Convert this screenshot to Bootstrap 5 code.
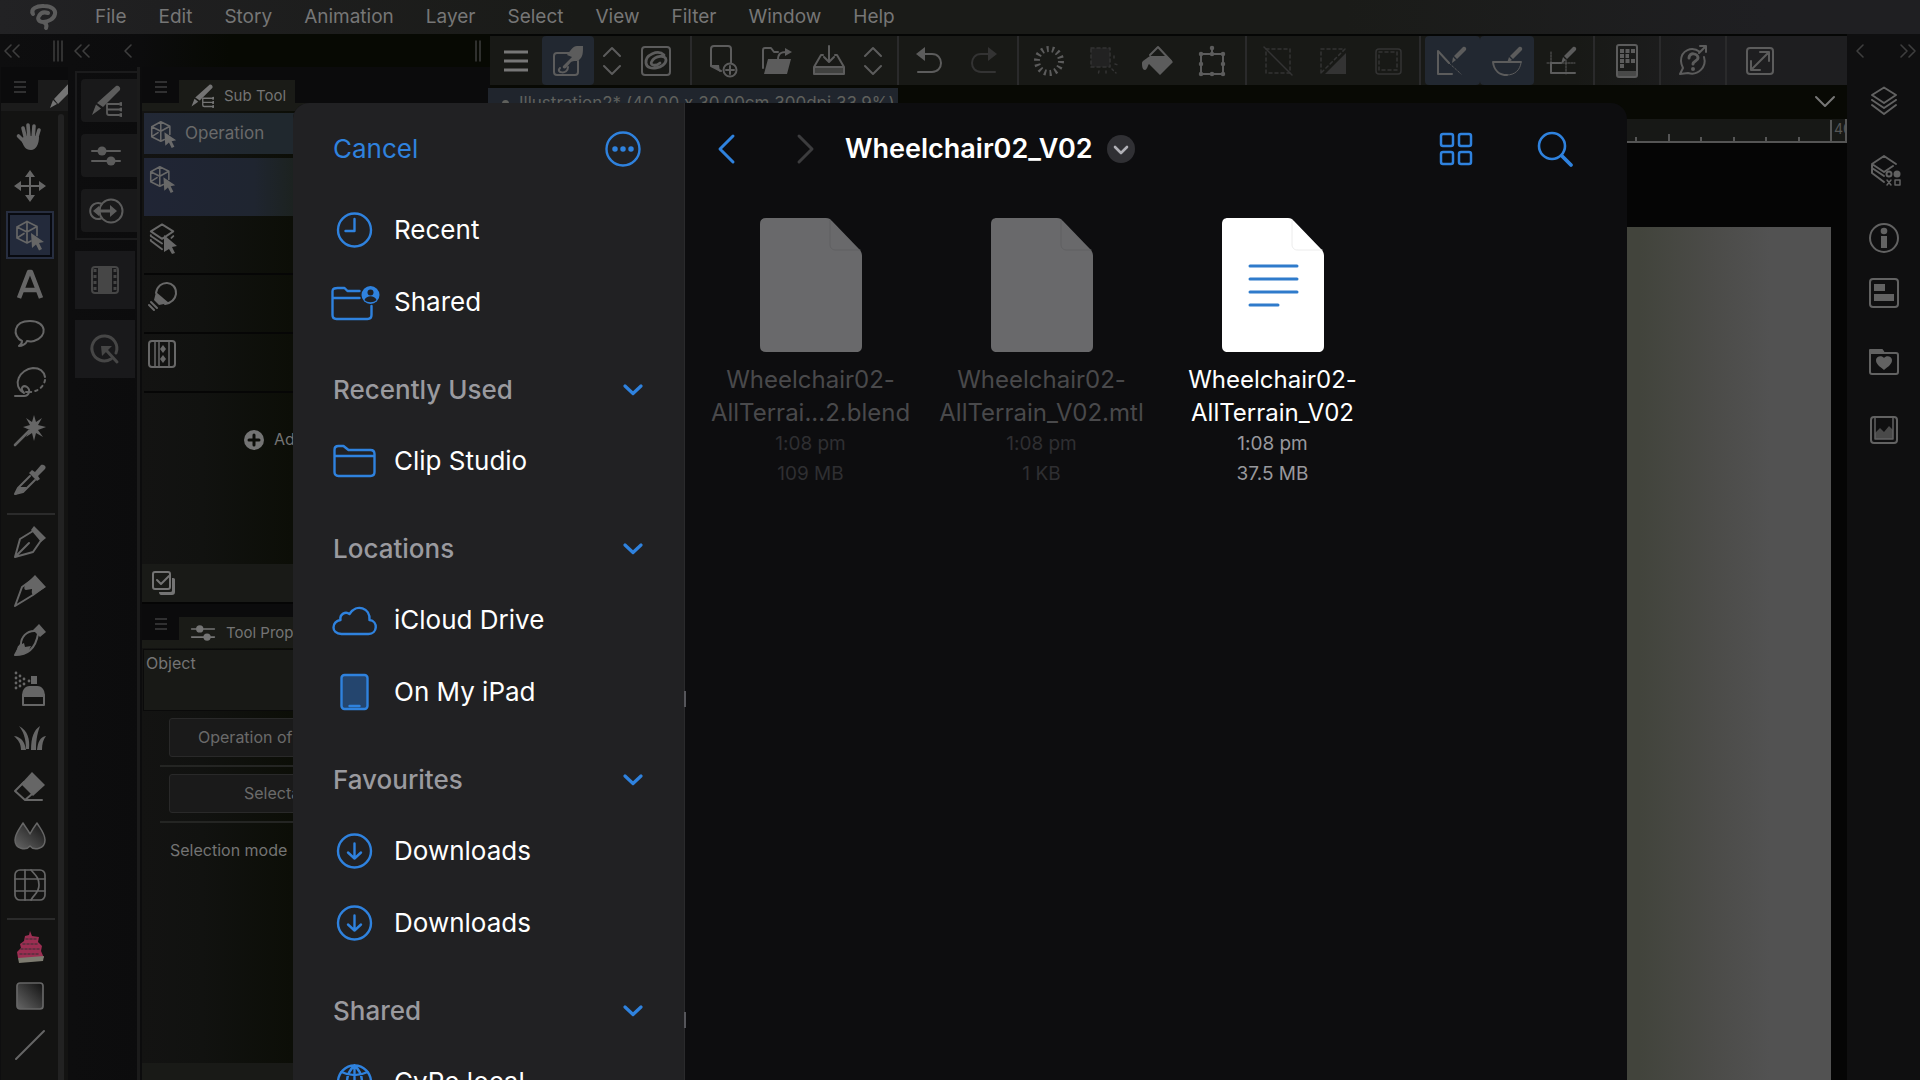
<!DOCTYPE html>
<html lang="en">
<head>
<meta charset="utf-8">
<meta name="viewport" content="width=device-width, initial-scale=1">
<title>Illustration2 - Import file</title>
<link href="https://cdn.jsdelivr.net/npm/bootstrap@5.3.0/dist/css/bootstrap.min.css" rel="stylesheet">
<style>
:root{--ink:#666;--blue:#2f82de}
body{font-family:Inter,"Liberation Sans",sans-serif;font-feature-settings:"calt" 0;background:#050605;color:#747474;height:100vh;overflow:hidden;line-height:1.2;fill:none;stroke-width:2;stroke-linecap:round;stroke-linejoin:round}
button{background:none;border:0;padding:0;color:inherit;font:inherit;white-space:nowrap}
a{color:inherit;text-decoration:none}
svg{display:block;flex:none;overflow:visible;stroke:currentColor}
.f{fill:currentColor;stroke:none}
.app-menu{height:34px;padding-left:29px;gap:32px;font-size:19px;color:#767676;background:linear-gradient(90deg,#222224 0,#1f1f20 160px,#1a1b18 30%,#1a1b18 70%,#1f1f22 92%)}
.brand{width:34px}
.left-dock{width:490px;background:linear-gradient(90deg,#0e0e0f 0,#0c0c0d 140px,#070903 230px)}
.dock-strip{height:33px;color:#3e3e3e}
.strip-a{width:70px;padding-left:4px}
.strip-b{width:70px;padding-left:4px}
.tool-col{width:67px;margin-left:1px;background:#131312}
.tabs-row{height:44px;border-bottom:8px solid #1b1b1b;color:#3e3e3e;padding-top:13px;background:#0b0b0c}
.tabs-row .burger{width:37px;padding:0 0 10px}
.tool-tab{background:#1b1b1b;height:31px;flex:1;color:#747474;overflow:hidden}
.tools{width:57px;padding-top:1px;color:var(--ink)}
.tool-btn{height:49px;display:flex;align-items:center;justify-content:center;width:100%}
.tool-btn.on .tool-ic{background:#232a3b;border:2px solid #080a10;outline:2px solid #272e40;width:44px;height:44px;display:flex;align-items:center;justify-content:center}
.tool-line{height:2px;margin:9px 3px 2px 6px;background:#2b2b2b}
.scroll-rail{width:6px;margin:3px 4px 0 0;background:#222;border-radius:3px 3px 0 0}
.quick-col{width:62px;margin-left:7px;color:#5c5c5c}
.quick-set{border:2px solid #1b1b1c;border-right:0;margin-top:4px;padding:6px 0 6px 4px;display:grid;gap:12px}
.quick-set button{height:43px;background:#19191a;border-radius:4px 0 0 4px;display:flex;align-items:center;padding-left:9px}
.quick-one{height:58px;margin-top:11px;background:#19191b;display:flex;align-items:center;justify-content:center;width:60px;color:#464646}
.dock-edge{width:3px;background:#1b1b1b}
.sub-col{margin-left:2px;background:linear-gradient(90deg,#131312 0,#111210 60px,#0c0e07 150px)}
.sub-col .tool-tab{flex:none;width:116px;padding-left:11px;gap:10px;font-size:15px;background:#1a1b17}
.sub-col .tabs-row{border-bottom-color:#1a1b17}
.sub-name{height:41px;margin:2px 0 0 2px;background:linear-gradient(90deg,#222836,#20282e 120px);padding-left:5px;gap:7px;font-size:17px;color:#6a6a6a}
.sub-row{height:59px;border-bottom:2px solid #060606;padding:6px 0 0 4px;width:100%;display:flex;color:#686868}
.sub-row.on{height:58px;margin-top:4px;border:0;background:linear-gradient(90deg,#202535,#1f2530 110px,#1c221f 152px)}
.sub-rows{padding:0 0 0 2px}
.add-row{height:94px;padding-left:102px;gap:10px;font-size:16px}
.list-foot{height:40px;margin-top:77px;background:#191a17;padding-left:10px;border-bottom:2px solid #050505}
.prop-name{height:62px;margin:1px 0 0 1px;background:#181916;border:1px solid #0a0a0a;padding:4px 2px;font-size:16px}
.prop-btn{display:block;height:39px;margin:7px 0 8px 27px;width:300px;border:1px solid #292929;border-radius:3px;background:#1a1a1a;text-align:left;font-size:16px;color:#6a6a6a;flex:none}
.prop-rule{height:2px;margin-left:18px;background:#242523;flex:none}
.prop-mode{padding:18px 0 0 28px;font-size:16px}
.prop-foot{height:17px;background:#191a17}
.tool-strip{height:49px;margin-top:2px;background:linear-gradient(90deg,#181916 80%,#1e1e20 90%);color:#5c5c5c}
.grp{border-right:2px solid #2a2a2b;padding:0 4px;display:flex;flex:none}
.grp button{flex:1;display:flex;align-items:center;justify-content:center}
.grp .narrow{flex:none;width:36px}
.grp .on{background:#222831;border-radius:4px}
.dim{color:#333}
.w201{width:202px;padding:0 8px 0 0}.w207{width:207px;padding:0 6px 0 5px}.w120{width:120px;padding:0 6px 0 3px}.w228{width:228px;padding:0 6px 0 3px}.w174{width:174px}.w67{width:66px}
.doc-row{height:34px;background:#080904;padding-top:3px;color:#777}
.doc-tab{width:410px;margin-left:-2px;background:#20252d;font-size:17px;padding:5px 0 0 14px;color:#5f605c;gap:10px}
.doc-dot{width:7px;height:7px;border-radius:50%;background:#5f605c;margin:7px 0 0}
.ruler-bar{height:24px;background:#171816;border-bottom:2px solid #555;color:#555;overflow:hidden}
.stage{background:#050505;padding:84px 16px 0 0}
.paper{background:linear-gradient(90deg,#42443c 0,#42443c 1150px,#4b4b48 1220px,#525252 1280px)}
.right-dock{width:73px;background:#0f0f10;color:#626262}
.right-dock .dock-strip{color:#3e3e3e;padding:0 4px 0 9px}
.right-dock button{display:flex;justify-content:center;width:100%}
.sheet{position:absolute;left:293px;right:293px;top:103px;bottom:0;border-radius:16px 16px 0 0;overflow:hidden;background:#0d0d0f;color:#fff}
.places{width:392px;background:#212123;border-right:1px solid #2a2a2c;padding:1px 0 0 40px;font-size:26px}
.places-head{height:90px;padding-right:41px;color:var(--blue)}
.place{height:72px;gap:18px;display:flex;align-items:center;color:#fff;flex:none}
.place svg{width:43px;color:var(--blue)}
.place-title{height:70px;margin-top:17px;padding-right:41px;color:#9a9a9f;width:100%;flex:none;font-weight:500}
.place-title svg{color:var(--blue)}
.split-mark{position:absolute;left:391px;width:2px;height:16px;background:#55555a}
.mark-a{top:588px}.mark-b{top:909px}
.files-head{height:92px;color:var(--blue)}
.files-title{font-size:27px;font-weight:600;color:#fff;margin:0 14px 0 28px}
.files{padding:23px 0 0 10px}
.file{width:231px;text-align:center}
.file svg{width:102px;height:134px;margin:0 auto 11px}
.file-name{font-size:24px;line-height:33px}
.file-meta{font-size:19px;line-height:30px;color:#98989d}
.file.off{color:#49494b}.file.off .file-meta{color:#2f2f32}
</style>
<script src="https://cdn.jsdelivr.net/npm/bootstrap@5.3.0/dist/js/bootstrap.bundle.min.js"></script>
</head>
<body class="d-flex flex-column position-relative">
<svg width="0" height="0" class="position-absolute" aria-hidden="true">
<defs>
<symbol id="cube" viewBox="0 0 32 32"><path d="M13 2.500l10 5v9M13 2.500l-10 5.500v11l10 5 4-2M3 8l10 5 10-5.500M13 2.500v21.500M3 19l7-4.500" stroke-width="1.700"/><path class="f" d="M17 14l13 9-5 1 3 6-3 1.500-3-6-4 3.500z"/></symbol>
<symbol id="penlist" viewBox="0 0 32 32"><path class="f" d="M26 1c2-1 5 1 4 4L13 22l-6-4zM6 19.500l5 4L2 30z"/><path d="M17 19h12M17 19v9c0 1 1 2 2 2h10M17 24.500h12" stroke-width="1.800"/><circle class="f" cx="31" cy="19" r="2"/><circle class="f" cx="31" cy="24.500" r="2"/><circle class="f" cx="31" cy="30" r="2"/></symbol>
<symbol id="stack" viewBox="0 0 32 32"><path d="M15 2.500L27 10l-12 8L3 10zM3 15l12 8M3 15v-1M27 15l-2 2M3 20l12 9M3 20v-1"/></symbol>
<symbol id="sliders" viewBox="0 0 32 32"><path d="M2 11h28M2 21h28"/><circle class="f" cx="12" cy="11" r="4.500"/><circle class="f" cx="21" cy="21" r="4.500"/></symbol>
<symbol id="menu3" viewBox="0 0 12 14"><path d="M0 2h12M0 7h12M0 12h12" stroke-width="1.500"/></symbol>
<symbol id="chev2" viewBox="0 0 16 14"><path d="M7 1L1 7l6 6M15 1L9 7l6 6" stroke-width="1.600"/></symbol>
<symbol id="updown" viewBox="0 0 18 30"><path d="M1 10l8-8 8 8M1 20l8 8 8-8"/></symbol>
<symbol id="down" viewBox="0 0 20 12"><path d="M2 2l8 7.500L18 2" stroke-width="3.200"/></symbol>
<symbol id="dl" viewBox="0 0 40 40"><circle cx="20" cy="20" r="16.500" stroke-width="2.400"/><path d="M20 12.500v15M13.500 21.500l6.500 6 6.500-6" stroke-width="2.400"/></symbol>
<linearGradient id="fade" x1="0" y1="1" x2="1" y2="0"><stop offset="0" stop-color="#666"/><stop offset="1" stop-color="#111"/></linearGradient>
</defs></svg>

<nav class="app-menu d-flex align-items-center flex-shrink-0" aria-label="Application">
<a class="brand" href="#" aria-label="Clip Studio"><svg width="28" height="28" viewBox="0 0 28 28" color="#5c5c5c" stroke-width="4"><path d="M4 11C1 6 8 2.500 15 3c8 0 12 4 11 8-1 5-7 8-12 8-4 0-6-3-4-6 2-4 6-4 9-3M14 19c3 1 4 3 3 6"/></svg></a>
<a href="#">File</a><a href="#">Edit</a><a href="#">Story</a><a href="#">Animation</a><a href="#">Layer</a><a href="#">Select</a><a href="#">View</a><a href="#">Filter</a><a href="#">Window</a><a href="#">Help</a>
</nav>

<div class="d-flex flex-fill" style="min-height:0">
<aside class="left-dock d-flex flex-column flex-shrink-0">
 <div class="dock-strip d-flex align-items-center">
  <div class="strip-a d-flex justify-content-between align-items-center pe-2"><svg width="16" height="14"><use href="#chev2"/></svg><svg width="8" height="20" viewBox="0 0 8 20" stroke-width="1.500"><path d="M0 0v20M4 0v20M8 0v20"/></svg></div>
  <div class="strip-b d-flex justify-content-between align-items-center pe-2"><svg width="16" height="14"><use href="#chev2"/></svg><svg width="8" height="14" viewBox="0 0 8 14"><path d="M7 1L1 7l6 6" stroke-width="1.600"/></svg></div>
  <svg class="ms-auto me-2" width="8" height="20" viewBox="0 0 8 20" stroke-width="1.500"><path d="M2 0v20M6 0v20"/></svg>
 </div>
 <div class="d-flex flex-fill" style="min-height:0">
  <section class="tool-col d-flex flex-column" aria-label="Tools">
   <div class="tabs-row d-flex"><button class="burger d-flex justify-content-center align-items-center" aria-label="Tool menu"><svg width="12" height="14"><use href="#menu3"/></svg></button>
    <div class="tool-tab"><svg width="30" height="30" viewBox="0 0 30 30"><path class="f" d="M32 2v10L20 24l-4-5zM15 20l4 4-7 4z"/></svg></div></div>
   <div class="d-flex justify-content-between flex-fill" style="min-height:0">
    <div class="tools">
     <button class="tool-btn" aria-label="Hand"><svg width="32" height="32" viewBox="0 0 32 32"><path stroke-width="3.600" d="M9 7l3 12M14 4l1 13M20 5l-1 13M25 9l-3 10M4.500 15l6 6"/><path class="f" d="M8 17l4-2h10l3 1c0 7-3 13-8 13-6 0-7-4-9-8z"/></svg></button>
     <button class="tool-btn" aria-label="Move"><svg width="32" height="32" viewBox="0 0 32 32"><path d="M16 5v22M5 16h22"/><path class="f" d="M16 0l5 7H11zM16 32l-5-7h10zM0 16l7-5v10zM32 16l-7 5V11z"/></svg></button>
     <button class="tool-btn on" aria-label="Operation"><span class="tool-ic"><svg width="32" height="32"><use href="#cube"/></svg></span></button>
     <button class="tool-btn" aria-label="Text"><svg width="32" height="32" viewBox="0 0 32 32"><path stroke-width="4.500" stroke-linecap="butt" d="M5 30L15 4h2l10 26M9 22h14"/></svg></button>
     <button class="tool-btn" aria-label="Balloon"><svg width="32" height="32" viewBox="0 0 32 32"><path d="M8 24C-2 19-1 4 16 4s18 16 4 20c-3 1-5 0-7 0-1 3-5 5-8 5 2-1 3-3 3-5z"/></svg></button>
     <button class="tool-btn" aria-label="Lasso"><svg width="32" height="32" viewBox="0 0 32 32"><path d="M10 27C-3 19 6 3 19 2c7 0 11 4 12 9M10 27c-5-6 0-8 3-6 4 3 2 9-3 9H1M12 26h4"/><path stroke-dasharray="2.500 4" d="M31 14c-1 6-6 11-14 12"/></svg></button>
     <button class="tool-btn" aria-label="Auto select"><svg width="32" height="32" viewBox="0 0 32 32"><path stroke-width="2.600" d="M1 30l14-14"/><path class="f" d="M20 0l2 7 6-4-4 7 8 2-8 3 5 7-7-4-2 8-2-8-6 4 4-7-7-3 7-2-4-7 6 4z"/></svg></button>
     <button class="tool-btn" aria-label="Eyedropper"><svg width="32" height="32" viewBox="0 0 32 32"><path d="M16 12L4 24 1 30l8-2 12-12"/><path class="f" d="M15 9l3-3 3 2 6-7c3-1 6 2 4 4l-7 7 2 3-3 2zM5 23h8l-5 5-7 3z"/></svg></button>
     <div class="tool-line"></div>
     <button class="tool-btn" aria-label="Pen"><svg width="32" height="32" viewBox="0 0 32 32"><path d="M19 5L6 13 1 31l18-5 9-13M1 31l14-14"/><path class="f" d="M20 0l12 12-5 4L17 4z"/></svg></button>
     <button class="tool-btn" aria-label="Marker"><svg width="32" height="32" viewBox="0 0 32 32"><path d="M19 4L8 12 1 31l18-11 11-8"/><path class="f" d="M21 0l11 12-13 8c-2-2-1-4-1-6l-6 1c-2 0-2-3-1-5z"/></svg></button>
     <button class="tool-btn" aria-label="Brush"><svg width="32" height="32" viewBox="0 0 32 32"><path d="M22 7C12 6 7 14 7 20L1 31c9 0 20-3 23-21"/><path class="f" d="M19 6l6-6 7 8-6 5zM4 22l6-3 1 4 6-1-3 6-13 4z"/></svg></button>
     <button class="tool-btn" aria-label="Airbrush"><svg width="32" height="32" viewBox="0 0 32 32"><path d="M9 22h21v10H9z"/><path class="f" d="M8 24c0-10 5-11 9-11h5c4 0 9 1 9 11zM17 3h6v8h-6z"/><path stroke-dasharray="0 5" stroke-width="2.800" d="M2 0v18M6 3v14M10 6v6M15 8v1"/></svg></button>
     <button class="tool-btn" aria-label="Decoration"><svg width="32" height="32" viewBox="0 0 32 32"><path class="f" d="M7 28C7 21 4 18 0 14c8 1 11 7 12 14zM12 27C12 16 9 9 5 4c9 5 11 13 10 23zM17 28c0-13 3-20 9-24-2 6-4 12-4 24zM23 28c1-8 3-13 9-14-3 4-4 8-4 14z"/></svg></button>
     <button class="tool-btn" aria-label="Eraser"><svg width="32" height="32" viewBox="0 0 32 32"><path d="M10 11l-9 9 10 9h17M18 23l-7 6"/><path class="f" d="M18 1l13 13-12 11L7 13z"/></svg></button>
     <button class="tool-btn" aria-label="Blend"><svg width="32" height="32" viewBox="0 0 32 32"><path fill="url(#fade)" stroke-width="1.500" d="M9 3c3 5 5 7 7 11 2-4 4-7 7-11 5 8 8 11 8 17 0 9-11 11-15 6-4 5-15 3-15-6C1 14 4 11 9 3z"/></svg></button>
     <button class="tool-btn" aria-label="Liquify"><svg width="32" height="32" viewBox="0 0 32 32" stroke-width="1.700"><rect x="1" y="1" width="30" height="30" rx="5"/><path d="M11 1v30M1 10h30M1 22h30M17 1c4 5 8 7 8 15s-5 9-8 15"/></svg></button>
     <div class="tool-line"></div>
     <button class="tool-btn" aria-label="Sticker brush"><svg width="32" height="34" viewBox="0 0 32 34"><path fill="#9c2e52" stroke="none" d="M16 1l2 5 7 1-1 5 4 4-1 5 3 7H4l-1-6 4-4-1-4 4-3 1-5 4-1z"/><path stroke="#55303e" stroke-width="1.500" stroke-dasharray="2 2" d="M12 9h10M9 14h15M7 19h18M6 24h20"/><path fill="#7d7b70" stroke="none" d="M4 28l26-2-1 5-24 2z"/></svg></button>
     <button class="tool-btn" aria-label="Gradient"><svg width="32" height="32" viewBox="0 0 32 32" stroke-width="1.700"><rect x="3" y="3" width="26" height="26" rx="3" fill="url(#fade)"/></svg></button>
     <button class="tool-btn" aria-label="Line"><svg width="32" height="32" viewBox="0 0 32 32"><path d="M2 30L30 2"/></svg></button>
    </div>
    <div class="scroll-rail"></div>
   </div>
  </section>
  <section class="quick-col" aria-label="Quick palettes">
   <div class="quick-set">
    <button aria-label="Sub tool"><svg width="32" height="32"><use href="#penlist"/></svg></button>
    <button aria-label="Tool property"><svg width="32" height="32"><use href="#sliders"/></svg></button>
    <button aria-label="Switch"><svg width="34" height="26" viewBox="0 0 34 26"><circle cx="21" cy="13" r="11.500"/><path d="M11 5.500a8 8 0 1 0 0 15"/><path d="M6 13h18" stroke-width="3"/><path class="f" d="M3 13l6-5v10zM27 13l-7-6v12z"/></svg></button>
   </div>
   <button class="quick-one" aria-label="Timeline"><svg width="28" height="28" viewBox="0 0 28 28"><rect x="1" y="1" width="26" height="26" rx="3"/><path class="f" d="M7 2h14v24H7z"/><path stroke-dasharray="3 3" stroke-linecap="butt" stroke-width="3" d="M4 3v23M24 3v23"/></svg></button>
   <button class="quick-one" aria-label="Quick access"><svg width="28" height="28" viewBox="0 0 28 28" stroke-width="3"><path d="M20 24a12.500 12.500 0 1 1 5-6M15 15l11 12"/><path class="f" d="M10 11h11l-10 10z"/></svg></button>
  </section>
  <div class="dock-edge"></div>
  <section class="sub-col flex-fill d-flex flex-column" aria-label="Sub Tool">
   <div class="tabs-row d-flex flex-shrink-0"><button class="burger d-flex justify-content-center align-items-center" aria-label="Sub tool menu"><svg width="12" height="14"><use href="#menu3"/></svg></button>
    <div class="tool-tab d-flex align-items-center"><svg width="24" height="24"><use href="#penlist"/></svg><span>Sub Tool</span></div></div>
   <div class="sub-name d-flex align-items-center flex-shrink-0"><svg width="29" height="30"><use href="#cube"/></svg><span>Operation</span></div>
   <div class="sub-rows">
    <button class="sub-row on" aria-label="Object"><svg width="29" height="30"><use href="#cube"/></svg></button>
    <button class="sub-row" aria-label="Layer selection"><svg width="30" height="32" viewBox="0 0 30 32"><use href="#stack" width="30" height="30"/><path class="f" d="M16 13l13 11-5 1 3 6-3 1-3-5-5 3z" stroke="#111210"/></svg></button>
    <button class="sub-row" aria-label="Light table"><svg width="30" height="30" viewBox="0 0 30 30"><path d="M8 12C10-2 29-1 28 13c-1 7-6 9-11 10M1 24l5 5M3 21l6 6"/><path class="f" d="M8 11l13 11-10 2-5-5z"/></svg></button>
    <button class="sub-row" aria-label="Edit timeline"><svg width="28" height="28" viewBox="0 0 28 28"><rect x="1" y="1" width="26" height="26" rx="3"/><path d="M7 1v26M11 2v24M21 2v24" stroke-width="1.500"/><path class="f" d="M15 5l3 4-3 4-3-4zM15 15l3 4-3 4-3-4z"/></svg></button>
   </div>
   <div class="add-row d-flex align-items-center flex-shrink-0"><svg width="20" height="20" viewBox="0 0 20 20"><circle class="f" cx="10" cy="10" r="10"/><path d="M10 5v10M5 10h10" stroke="#0c0d09" stroke-width="3"/></svg><span>Add sub tool</span></div>
   <div class="list-foot d-flex align-items-center flex-shrink-0"><svg width="24" height="24" viewBox="0 0 24 24"><rect x="1" y="1" width="17" height="17" rx="2"/><path d="M5 9l4 4 8-8"/><path class="f" d="M20 7h1c2 0 2 1 2 2v12c0 2-1 3-3 3H9c-1 0-2-1-2-3h11c2 0 2-1 2-2z"/></svg></div>
   <div class="tabs-row d-flex flex-shrink-0"><button class="burger d-flex justify-content-center align-items-center" aria-label="Property menu"><svg width="12" height="14"><use href="#menu3"/></svg></button>
    <div class="tool-tab d-flex align-items-center w-75"><svg width="26" height="26"><use href="#sliders"/></svg><span>Tool Property</span></div></div>
   <div class="prop-name flex-shrink-0">Object</div>
   <button class="prop-btn" style="padding-left:28px">Operation of transparent part</button>
   <div class="prop-rule"></div>
   <button class="prop-btn" style="padding-left:74px">Selectable object</button>
   <div class="prop-rule"></div>
   <div class="prop-mode">Selection mode</div>
   <div class="prop-foot mt-auto"></div>
  </section>
 </div>
</aside>

<main class="flex-fill d-flex flex-column" style="min-width:0">
 <div class="tool-strip d-flex flex-shrink-0">
  <div class="grp w201">
   <button aria-label="Menu"><svg width="24" height="22" viewBox="0 0 24 22" stroke-width="3" stroke-linecap="butt"><path d="M0 2h24M0 11h24M0 20h24" color="#777"/></svg></button>
   <button class="on" aria-label="Touch gestures"><svg width="30" height="30" viewBox="0 0 30 30"><path d="M16 7H4C2 7 1 8 1 10v16c0 2 1 3 3 3h18c2 0 3-1 3-3V15M7 22c-5 5 8 7 8-1"/><path class="f" d="M10 20l9-9-5-2c3-4 6-9 10-9h6c0 7 0 11-4 14-3 2-5 0-8 2l-5 6c-2 1-4 0-3-2z"/></svg></button>
   <button class="narrow" aria-label="Expand"><svg width="18" height="30"><use href="#updown"/></svg></button>
   <button aria-label="Clip Studio"><svg width="30" height="30" viewBox="0 0 30 30"><rect x="1" y="1" width="28" height="28" rx="3"/><path d="M23 9C17 3 4 9 5 17c1 9 20 5 20-3 0-6-11-4-14 1-3 4 3 6 8 2" stroke-width="2.800"/></svg></button>
  </div>
  <div class="grp w207">
   <button aria-label="New"><svg width="30" height="32" viewBox="0 0 30 32"><path d="M13 26L3 21V4c0-2 1-3 3-3h14c2 0 3 1 3 3v14"/><path class="f" d="M3 20h8l1 7z"/><circle cx="22" cy="25" r="6.500"/><path d="M22 21v8M18 25h8"/></svg></button>
   <button aria-label="Open"><svg width="32" height="30" viewBox="0 0 32 30"><path d="M3 22V4c0-1 1-2 2-2h6l3 4h4M18 14c0-6 2-8 9-8"/><path class="f" d="M8 13h23l-4 15H4zM25 2l7 4-7 4z"/></svg></button>
   <button aria-label="Save"><svg width="32" height="30" viewBox="0 0 32 30"><path d="M10 9H8L1 21v7h30v-7L24 9h-2M1 21h30M16 0v15M11 11l5 5 5-5"/><path class="f" d="M1 22h30v6H1z" opacity=".6"/></svg></button>
   <button class="narrow" aria-label="More"><svg width="18" height="30"><use href="#updown"/></svg></button>
  </div>
  <div class="grp w120">
   <button aria-label="Undo"><svg width="26" height="28" viewBox="0 0 26 28"><path d="M8 7h8c12 0 12 18 0 18H2"/><path class="f" d="M0 7l9-7v14z"/></svg></button>
   <button class="dim" aria-label="Redo"><svg width="26" height="28" viewBox="0 0 26 28"><path d="M18 7h-8C-2 7-2 25 10 25h14"/><path class="f" d="M26 7l-9-7v14z"/></svg></button>
  </div>
  <div class="grp w228">
   <button aria-label="Clear"><svg width="30" height="30" viewBox="0 0 30 30"><circle cx="15" cy="15" r="12" stroke-width="6" stroke-linecap="butt" stroke-dasharray="2 3.390"/></svg></button>
   <button class="dim" aria-label="Clear outside"><svg width="30" height="30" viewBox="0 0 30 30" stroke-width="1.500"><path stroke-dasharray="3 3" d="M3 2h19v19H3z" fill="#222"/><path stroke-dasharray="2 3" d="M26 10v4M27 18l3 1M24 23l4 4M18 25v5M11 25l-1 4"/></svg></button>
   <button aria-label="Fill"><svg width="32" height="30" viewBox="0 0 32 30"><path d="M8 9l8-8 13 14"/><path class="f" d="M8 10h17l6 6-13 13L7 18c-1 1-2 6-4 6-3 0-3-5-3-7s4-4 5-5z"/></svg></button>
   <button aria-label="Scale and rotate"><svg width="28" height="32" viewBox="0 0 28 32"><path d="M3 9h22v20H3zM14 9V3"/><path stroke-width="4.500" d="M3 9v0M25 9v0M3 29v0M25 29v0M14 3v0M14 9v0M14 29v0M3 19v0M25 19v0"/></svg></button>
  </div>
  <div class="grp w174 dim">
   <button aria-label="Deselect"><svg width="28" height="28" viewBox="0 0 28 28" stroke-width="1.500"><path stroke-dasharray="3 3" d="M2 2h24v24H2z"/><path d="M0 0l28 28"/></svg></button>
   <button aria-label="Invert selection"><svg width="28" height="28" viewBox="0 0 28 28" stroke-width="1.500"><path stroke-dasharray="3 3" d="M2 26V2h24L2 26"/><path class="f" d="M27 6v21H6z"/></svg></button>
   <button aria-label="Selection border"><svg width="28" height="28" viewBox="0 0 28 28" stroke-width="1.500"><rect x="2" y="2" width="25" height="25" rx="3"/><path stroke-dasharray="3 3" d="M5 5h18v18H5z"/></svg></button>
  </div>
  <div class="grp w174">
   <button class="on" aria-label="Snap to ruler"><svg width="30" height="30" viewBox="0 0 30 30"><path d="M15 28H1V5l11 12"/><path d="M12 17l12 11" stroke-width="1" stroke-dasharray="2 2"/><path class="f" d="M26 1c2-1 4 1 3 3l-9 9-3-3zM16 11l3 3-4 3z"/></svg></button>
   <button class="on" aria-label="Snap to special ruler"><svg width="30" height="30" viewBox="0 0 30 30"><path d="M12 16H1c1 9 7 13 14 13M1 16h28"/><path d="M15 29c8 0 13-5 14-12" stroke-width="1"/><path class="f" d="M27 1c2-1 4 1 3 3l-9 9-3-3zM17 11l3 3-5 3z"/></svg></button>
   <button aria-label="Snap to grid"><svg width="30" height="30" viewBox="0 0 30 30"><path d="M14 17H4v10h24"/><path d="M0 17h28M19 14v14M4 6v11" stroke-width="1" stroke-dasharray="2 1"/><path class="f" d="M26 1c2-1 4 1 3 3l-9 9-3-3zM16 11l3 3-5 4z"/></svg></button>
  </div>
  <div class="grp w67"><button aria-label="Companion mode"><svg width="22" height="34" viewBox="0 0 22 34"><rect x="1" y="1" width="20" height="32" rx="2"/><path stroke-width="4" stroke-linecap="butt" stroke-dasharray="4 1.500" d="M4 7h15M4 12h9M4 17h15M4 22h4"/><path class="f" d="M1 27h20v6H1z" opacity=".7"/></svg></button></div>
  <div class="grp w67"><button aria-label="Support"><svg width="30" height="32" viewBox="0 0 30 32"><path d="M22 7C14 1 3 5 3 16c0 3 1 5 2 7l-3 6 8-1c10 3 19-6 16-16M21 8l7-7M22 1h6v6"/><path d="M11 13c0-6 9-5 9 0 0 3-5 3-5 6" stroke-width="3"/><circle class="f" cx="15" cy="24" r="2"/></svg></button></div>
  <div class="grp w67 border-0"><button aria-label="Full screen"><svg width="28" height="28" viewBox="0 0 28 28"><rect x="1" y="1" width="26" height="26" rx="3"/><path d="M6 22L22 6M14 5h9v9M5 14v9h9"/></svg></button></div>
 </div>
 <div class="doc-row d-flex flex-shrink-0 justify-content-between">
  <div class="doc-tab d-flex text-nowrap"><i class="doc-dot"></i><span>Illustration2* (40.00 x 30.00cm 300dpi 33.9%)</span></div>
  <button class="me-2 pe-1 pb-1" aria-label="Documents"><svg width="20" height="12" viewBox="0 0 20 12"><path d="M1 1l9 9 9-9"/></svg></button>
 </div>
 <div class="ruler-bar d-flex justify-content-end flex-shrink-0"><svg width="240" height="22" viewBox="0 0 240 22" stroke-linecap="butt"><path d="M29 18v4M62 15v7M94 18v4M127 18v4M159 18v4M192 18v4M224 1v21M239 0v22"/><text class="f" x="227" y="15" font-size="14">40</text></svg></div>
 <div class="stage flex-fill d-flex"><div class="paper flex-fill"></div></div>
</main>

<aside class="right-dock flex-shrink-0" aria-label="Palettes">
 <div class="dock-strip d-flex align-items-center justify-content-between"><svg width="8" height="14" viewBox="0 0 8 14"><path d="M7 1L1 7l6 6" stroke-width="1.600"/></svg><svg width="16" height="14" viewBox="0 0 16 14"><path d="M1 1l6 6-6 6M9 1l6 6-6 6" stroke-width="1.600"/></svg></div>
 <button style="padding-top:18px" aria-label="Layer"><svg width="30" height="32" viewBox="0 0 30 32"><path d="M15 2.500l12 7.500-12 8L3 10zM3 15l12 8 12-8M3 20l12 9 12-9M3 15v0M27 15v0"/></svg></button>
 <button style="padding-top:36px" aria-label="Layer property"><svg width="30" height="32" viewBox="0 0 30 32"><path d="M27 11l-12-8L3 11l12 8 9-6M3 15l12 8M3 20l12 9M3 12v8"/><circle cx="20" cy="21" r="2.500"/><circle class="f" cx="28" cy="21" r="3.500"/><path d="M26 27h5v5h-5zM18 27l4 5M22 27l-4 5" stroke-width="1.500"/></svg></button>
 <button style="padding-top:38px" aria-label="Information"><svg width="30" height="30" viewBox="0 0 30 30"><circle cx="15" cy="15" r="14"/><circle class="f" cx="15" cy="8" r="3.300"/><path class="f" d="M12 13h6v12h-6z"/></svg></button>
 <button style="padding-top:25px" aria-label="Navigator"><svg width="30" height="30" viewBox="0 0 30 30"><rect x="1" y="1" width="28" height="28" rx="3"/><path class="f" d="M5 6h11v7H5zM5 16h20v7H5z"/></svg></button>
 <button style="padding-top:40px" aria-label="Material"><svg width="30" height="27" viewBox="0 0 30 27"><path d="M1 24V2h12l2 3h12c1 0 2 1 2 2v17c0 1-1 2-2 2H3c-1 0-2-1-2-2z"/><path class="f" d="M1 1h12l3 5H1zM15 22c-5-4-8-6-8-10s6-5 8-2c2-3 8-2 8 2s-3 6-8 10z"/></svg></button>
 <button style="padding-top:41px" aria-label="Sub view"><svg width="28" height="28" viewBox="0 0 28 28"><rect x="1" y="1" width="26" height="26" rx="3"/><path d="M5 2v21h18V2" stroke-width="1.500"/><path class="f" opacity=".7" d="M5 17l5-5 4 4 5-6 4 4v9H5z"/></svg></button>
</aside>
</div>

<div class="sheet d-flex" role="dialog" aria-label="Choose a file">
 <nav class="places d-flex flex-column flex-shrink-0" aria-label="Places">
  <div class="places-head d-flex align-items-center justify-content-between flex-shrink-0"><button>Cancel</button><button aria-label="More"><svg width="40" height="40" viewBox="0 0 40 40" stroke-width="2.400"><circle cx="20" cy="20" r="16.500"/><path stroke-width="5.500" d="M12 20v0M20 20v0M28 20v0"/></svg></button></div>
  <a class="place" href="#"><svg width="40" height="40" viewBox="0 0 40 40" stroke-width="2.400"><circle cx="20" cy="20" r="16.500"/><path d="M20 9v12h-9"/></svg>Recent</a>
  <a class="place" href="#"><svg width="40" height="40" viewBox="0 0 40 40" stroke-width="2.400"><path d="M25 9H13l-3-3H3C1 6-2 6-2 9v24c0 2 1 4 4 4h31c3 0 4-2 4-4v-9M-2 16h27"/><circle class="f" cx="36" cy="13" r="9"/><circle cx="36" cy="10.500" r="3" fill="#212123" stroke="none"/><path fill="#212123" stroke="none" d="M30 18c2-5 10-5 12 0-3 3-9 3-12 0z"/></svg>Shared</a>
  <button class="place-title d-flex align-items-center justify-content-between">Recently Used<svg width="20" height="12"><use href="#down"/></svg></button>
  <a class="place" href="#"><svg width="40" height="40" viewBox="0 0 40 40" stroke-width="2.400"><path d="M4 5h5l5 4h22c3 0 4 2 4 4v18c0 3-2 4-4 4H4c-3 0-4-2-4-4V9c0-3 1-4 4-4zM0 15h40"/></svg>Clip Studio</a>
  <button class="place-title d-flex align-items-center justify-content-between">Locations<svg width="20" height="12"><use href="#down"/></svg></button>
  <a class="place" href="#"><svg width="40" height="40" viewBox="0 0 40 40" stroke-width="2.400"><path d="M7 34C-4 34-3 21 6 20c-1-6 5-9 9-6C22 3 36 8 35 20c9 1 8 14-1 14z"/></svg>iCloud Drive</a>
  <a class="place" href="#"><svg width="40" height="40" viewBox="0 0 40 40" stroke-width="2.400"><rect x="7" y="3" width="26" height="34" rx="3" fill="#24456e"/><path d="M15 34h10"/></svg>On My iPad</a>
  <button class="place-title d-flex align-items-center justify-content-between">Favourites<svg width="20" height="12"><use href="#down"/></svg></button>
  <a class="place" href="#"><svg width="40" height="40"><use href="#dl"/></svg>Downloads</a>
  <a class="place" href="#"><svg width="40" height="40"><use href="#dl"/></svg>Downloads</a>
  <button class="place-title d-flex align-items-center justify-content-between">Shared<svg width="20" height="12"><use href="#down"/></svg></button>
  <a class="place" href="#"><svg width="40" height="40" viewBox="0 0 40 40" stroke-width="2.400"><circle cx="20" cy="20" r="16.500"/><path d="M20 3.500c-10 9-10 24 0 33M20 3.500c10 9 10 24 0 33M20 3.500v33M3.500 20h33M7 10c8 4 18 4 26 0"/></svg>CyPe.local</a>
 </nav>
 <i class="split-mark mark-a"></i><i class="split-mark mark-b"></i>
 <section class="flex-fill" aria-label="Files">
  <div class="files-head d-flex align-items-center">
   <button style="margin-left:31px" aria-label="Back"><svg width="20" height="32" viewBox="0 0 20 32" stroke-width="3"><path d="M17 3L4 16l13 13"/></svg></button>
   <button style="margin-left:61px;color:#3c3c3e" aria-label="Forward"><svg width="20" height="32" viewBox="0 0 20 32" stroke-width="3"><path d="M2 3l13 13L2 29"/></svg></button>
   <h1 class="files-title">Wheelchair02_V02</h1>
   <button aria-label="Folder options"><svg width="28" height="28" viewBox="0 0 28 28"><circle cx="14" cy="14" r="14" fill="#303034" stroke="none"/><path d="M8 12l6 6 6-6" stroke="#b0b0b6" stroke-width="2.600"/></svg></button>
   <button class="ms-auto" aria-label="Icon view"><svg width="34" height="34" viewBox="0 0 34 34" stroke-width="2.500"><rect x="2" y="2" width="12" height="12" rx="2"/><rect x="20" y="2" width="12" height="12" rx="2"/><rect x="2" y="20" width="12" height="12" rx="2"/><rect x="20" y="20" width="12" height="12" rx="2"/></svg></button>
   <button style="margin:0 54px 0 64px" aria-label="Search"><svg width="36" height="36" viewBox="0 0 36 36" stroke-width="2.600"><circle cx="15" cy="15" r="13"/><path d="M25 25l9 9" stroke-width="3.800"/></svg></button>
  </div>
  <div class="files d-flex">
   <div class="file off"><svg viewBox="0 0 102 134"><path fill="#69696b" stroke="none" d="M6 0h60c3 0 4 1 6 3l27 28c2 2 3 4 3 7v90c0 4-2 6-6 6H6c-4 0-6-2-6-6V6c0-4 2-6 6-6z"/><path stroke="#606062" stroke-width="1" d="M70 2v24c0 4 2 6 6 6h24"/></svg><div class="file-name">Wheelchair02-<br>AllTerrai...2.blend</div><div class="file-meta">1:08 pm<br>109 MB</div></div>
   <div class="file off"><svg viewBox="0 0 102 134"><path fill="#69696b" stroke="none" d="M6 0h60c3 0 4 1 6 3l27 28c2 2 3 4 3 7v90c0 4-2 6-6 6H6c-4 0-6-2-6-6V6c0-4 2-6 6-6z"/><path stroke="#606062" stroke-width="1" d="M70 2v24c0 4 2 6 6 6h24"/></svg><div class="file-name">Wheelchair02-<br>AllTerrain_V02.mtl</div><div class="file-meta">1:08 pm<br>1 KB</div></div>
   <div class="file"><svg viewBox="0 0 102 134"><path fill="#fff" stroke="none" d="M6 0h60c3 0 4 1 6 3l27 28c2 2 3 4 3 7v90c0 4-2 6-6 6H6c-4 0-6-2-6-6V6c0-4 2-6 6-6z"/><path stroke="#ececec" stroke-width="1" d="M70 2v24c0 4 2 6 6 6h24"/><path stroke="#2f7bcb" stroke-width="3" d="M28 48h47M28 61h47M28 74h47M28 87h28"/></svg><div class="file-name">Wheelchair02-<br>AllTerrain_V02</div><div class="file-meta">1:08 pm<br>37.5 MB</div></div>
  </div>
 </section>
</div>
</body>
</html>
